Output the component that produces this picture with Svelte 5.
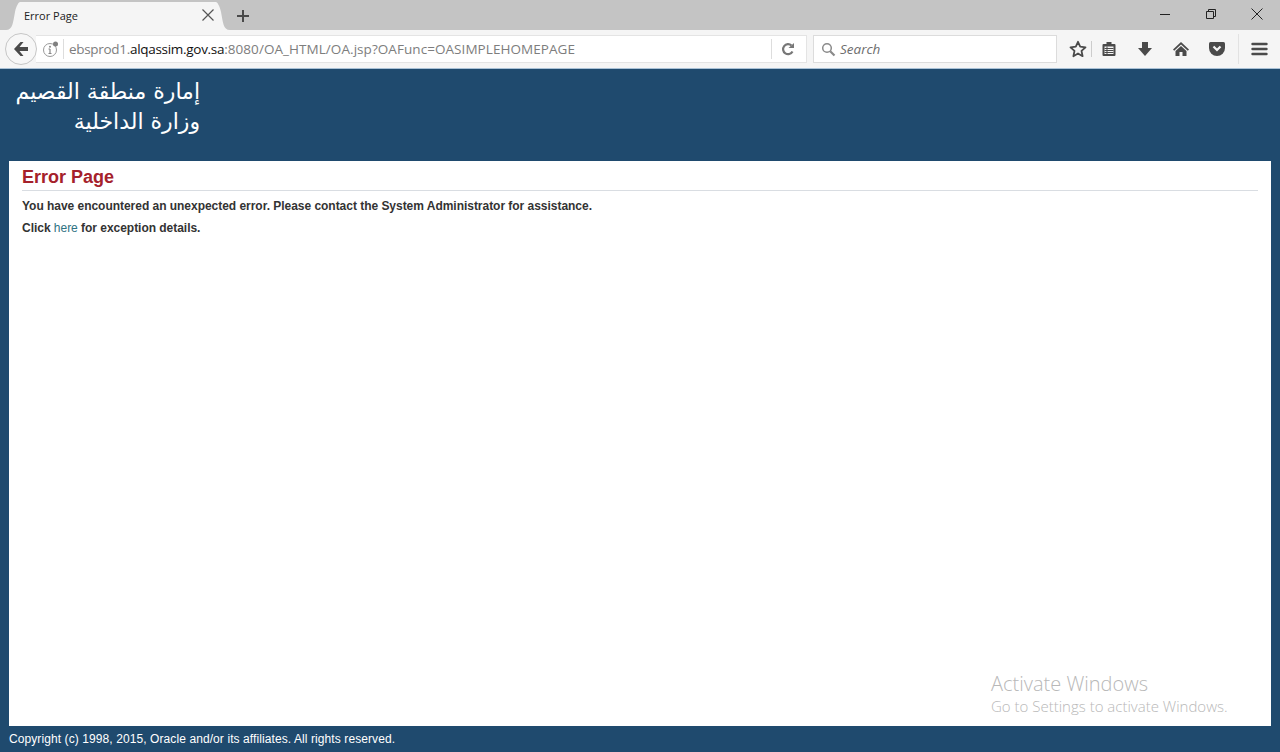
<script>
  let title = 'Error Page'
</script>

<div class="page">
  <div class="tabstrip">
    <div class="tab">
      <svg class="tabside" width="14" height="30" viewBox="0 0 14 30"><path d="M0 30C7 30 7 22 9 12 10.500 5 13 2 14 2V30Z" fill="#f5f5f5"/></svg>
      <div class="tabbody">
        <span class="tabtitle">{title}</span>
        <svg width="14" height="14" viewBox="0 0 14 14"><path d="M1.500 1.500 12.500 12.500M12.500 1.500 1.500 12.500" stroke="#555" stroke-width="1.200" fill="none"/></svg>
      </div>
      <svg class="tabside" width="14" height="30" viewBox="0 0 14 30"><path d="M14 30C7 30 7 22 5 12 3.500 5 1 2 0 2V30Z" fill="#f5f5f5"/></svg>
    </div>
    <svg class="newtab" width="14" height="14" viewBox="0 0 14 14"><path d="M7 1V13M1 7H13" stroke="#4a4a4a" stroke-width="2" fill="none"/></svg>
    <div class="winbtns">
      <svg width="12" height="12" viewBox="0 0 12 12"><path d="M1 6.500H11" stroke="#222" stroke-width="1"/></svg>
      <svg width="12" height="12" viewBox="0 0 12 12"><path d="M1.500 3.500H8.500V10.500H1.500ZM3.500 3.500V1.500H10.500V8.500H8.500" stroke="#222" fill="none"/></svg>
      <svg width="12" height="12" viewBox="0 0 12 12"><path d="M.5.500 11.500 11.500M11.500.500.500 11.500" stroke="#222" fill="none"/></svg>
    </div>
  </div>

  <div class="toolbar">
    <div class="urlbar">
      <svg class="info" width="18" height="18" viewBox="0 0 18 18">
        <circle cx="8" cy="10" r="6.500" stroke="#999" fill="none"/>
        <path d="M8 9V13.500M6.500 9H8M6.500 13.500H9.500" stroke="#888" stroke-width="1.200" fill="none"/>
        <circle cx="8" cy="6.800" r="1" fill="#888"/>
        <circle cx="13.500" cy="4" r="2.500" fill="#808080"/>
      </svg>
      <span class="urlsep"></span>
      <span class="url">ebsprod1.<b>alqassim.gov.sa</b><span class="urlrest">:8080/OA_HTML/OA.jsp?OAFunc=OASIMPLEHOMEPAGE</span></span>
      <span class="urlsep end"></span>
      <svg class="reload" width="14" height="14" viewBox="0 0 14 14"><path d="M11.500 9.500A5 5 0 1 1 10.500 3.500" stroke="#777" stroke-width="2.200" fill="none"/><path d="M7.500 6H13V1Z" fill="#777"/></svg>
    </div>
    <div class="back">
      <svg width="18" height="16" viewBox="0 0 18 16"><path d="M8.500 1 2 8 8.500 15H11.500L7.500 10H16V6H7.500L11.500 1Z" fill="#4a4a4a"/></svg>
    </div>
    <div class="search">
      <svg width="15" height="15" viewBox="0 0 15 15"><circle cx="6" cy="6" r="4.300" stroke="#8a8a8a" stroke-width="1.500" fill="none"/><path d="M9.200 9.200 13.500 13.500" stroke="#8a8a8a" stroke-width="2.200"/></svg>
      <span>Search</span>
    </div>
    <div class="tools">
      <svg class="star" width="18" height="18" viewBox="0 0 18 18"><path d="M9 1.800 11.200 6.700 16.500 7.300 12.500 10.900 13.600 16.200 9 13.500 4.400 16.200 5.500 10.900 1.500 7.300 6.800 6.700Z" stroke="#4a4a4a" stroke-width="1.800" stroke-linejoin="round" fill="none"/></svg>
      <span class="toolsep"></span>
      <svg class="list" width="16" height="16" viewBox="0 0 16 16"><path d="M2.500 3H5.500V1H10.500V3H13.500Q14.500 3 14.500 4V14Q14.500 15 13.500 15H2.500Q1.500 15 1.500 14V4Q1.500 3 2.500 3Z" fill="#4a4a4a"/><path d="M3.500 5.500H12.500V13H3.500Z" fill="#f5f5f5"/><path d="M3.500 7.500H12.500M3.500 9.500H12.500M3.500 11.500H12.500M6 5.500V13" stroke="#4a4a4a"/></svg>
      <svg class="down" width="16" height="16" viewBox="0 0 16 16"><path d="M5 1H11V7H15L8 15 1 7H5Z" fill="#4a4a4a"/></svg>
      <svg class="home" width="16" height="16" viewBox="0 0 16 16"><path d="M8 1 16 8.500 14.800 9.700 8 3.500 1.200 9.700 0 8.500Z" fill="#4a4a4a"/><path d="M8 5 13.500 10V15H9.500V11H6.500V15H2.500V10Z" fill="#4a4a4a"/></svg>
      <svg class="pocket" width="18" height="16" viewBox="0 0 18 16"><path d="M2.500 1H15.500Q17 1 17 2.500V7A8 8 0 0 1 1 7V2.500Q1 1 2.500 1Z" fill="#4a4a4a"/><path d="M5.500 5.500 9 9 12.500 5.500" stroke="#f5f5f5" stroke-width="2.200" fill="none"/></svg>
      <span class="toolsep menu"></span>
      <svg width="17" height="14" viewBox="0 0 17 14"><path d="M1.500 2H15.500M1.500 7H15.500M1.500 12H15.500" stroke="#4a4a4a" stroke-width="2.400" stroke-linecap="round"/></svg>
    </div>
  </div>

  <header class="banner">
    <div class="logo" dir="rtl">
      <div>إمارة منطقة القصيم</div>
      <div>وزارة الداخلية</div>
    </div>
  </header>

  <main class="content">
    <h1>{title}</h1>
    <p>You have encountered an unexpected error. Please contact the System Administrator for assistance.</p>
    <p>Click <a href="#details">here</a> for exception details.</p>
    <div class="activate">
      <div class="big">Activate Windows</div>
      <div>Go to Settings to activate Windows.</div>
    </div>
  </main>

  <footer class="foot">Copyright (c) 1998, 2015, Oracle and/or its affiliates. All rights reserved.</footer>
</div>

<style>
  :global(body) {
    margin: 0;
    background: #1f4a6e;
  }

  .page {
    display: flex;
    flex-direction: column;
    height: 752px;
    overflow: hidden;
    font-family: "Liberation Sans", Arial, sans-serif;
    background: #1f4a6e;
  }

  /* browser chrome */
  .tabstrip {
    display: flex;
    align-items: stretch;
    height: 30px;
    flex: none;
    background: #c4c4c4;
  }

  .tab {
    display: flex;
    margin-left: 6px;
    width: 224px;
  }

  .tabside {
    flex: none;
    display: block;
  }

  .tabbody {
    flex: 1;
    display: flex;
    align-items: center;
    justify-content: space-between;
    margin-top: 2px;
    padding: 0 1px 2px 4px;
    background: #f5f5f5;
  }

  .tabtitle {
    font: 11px "Open Sans", sans-serif;
    color: #222;
  }

  .newtab {
    align-self: center;
    margin-left: 6px;
    margin-bottom: -2px;
  }

  .winbtns {
    display: flex;
    align-items: center;
    gap: 34px;
    margin-left: auto;
    padding-right: 17px;
    margin-bottom: 2px;
  }

  .toolbar {
    position: relative;
    display: flex;
    align-items: center;
    flex: none;
    height: 39px;
    box-sizing: border-box;
    padding-left: 36px;
    background: #f5f5f5;
    border-bottom: 1px solid #a9c1d6;
  }

  .back {
    position: absolute;
    left: 5px;
    top: 3px;
    width: 30px;
    height: 30px;
    display: flex;
    align-items: center;
    justify-content: center;
    background: #f7f7f7;
    border: 1px solid #c6c6c6;
    border-radius: 50%;
  }

  .urlbar {
    display: flex;
    align-items: center;
    width: 771px;
    height: 28px;
    box-sizing: border-box;
    padding-left: 6px;
    background: #fff;
    border: 1px solid #e4e4e4;
    border-left: none;
  }

  .info {
    flex: none;
  }

  .urlsep {
    width: 1px;
    height: 20px;
    margin: 0 5px 0 3px;
    background: #ddd;
    flex: none;
  }

  .urlsep.end {
    margin: 0 9px 0 auto;
  }

  .url {
    font: 13.500px "Open Sans", sans-serif;
    color: #7d7d7d;
    white-space: nowrap;
    letter-spacing: -0.3px;
  }

  .url b {
    font-weight: 400;
    color: #111;
  }

  .urlrest {
    letter-spacing: 0.06px;
  }

  .reload {
    flex: none;
    margin-right: 11px;
  }

  .search {
    display: flex;
    align-items: center;
    gap: 4px;
    width: 244px;
    height: 28px;
    box-sizing: border-box;
    margin-left: 6px;
    padding-left: 7px;
    background: #fff;
    border: 1px solid #dcdcdc;
    font: italic 13.500px "Open Sans", sans-serif;
    color: #6d6d6d;
  }

  .tools {
    display: flex;
    align-items: center;
    flex: 1;
    padding-left: 12px;
  }

  .toolsep {
    width: 1px;
    height: 16px;
    margin: 0 9px 0 4px;
    background: #ccc;
  }

  .down {
    margin-left: 20px;
  }

  .home {
    margin-left: 20px;
  }

  .pocket {
    margin-left: 19px;
  }

  .toolsep.menu {
    height: 30px;
    margin: 0 12px 0 12px;
    background: #e2e2e2;
  }

  /* page */
  .banner {
    flex: none;
    height: 92px;
    box-sizing: border-box;
    padding: 8px 0 0 16px;
  }

  .logo {
    width: 184px;
    font: 22px/30px "DejaVu Sans", sans-serif;
    color: #fff;
    white-space: nowrap;
  }

  .content {
    position: relative;
    flex: 1;
    margin: 0 9px;
    padding: 5px 13px 0;
    background: #fff;
  }

  h1 {
    margin: 0 0 8px;
    padding-bottom: 2px;
    font-size: 18px;
    line-height: 22px;
    font-weight: 700;
    color: #a5212b;
    border-bottom: 1px solid #d9dde2;
  }

  p {
    margin: 0 0 7px;
    font-size: 12px;
    line-height: 15px;
    font-weight: 700;
    letter-spacing: -0.03px;
    color: #333;
  }

  a {
    font-weight: 400;
    color: #2f7383;
    text-decoration: none;
  }

  .activate {
    position: absolute;
    left: 982px;
    top: 510px;
    font: 300 15px/19px "Open Sans", sans-serif;
    color: #b8b8b8;
    white-space: nowrap;
  }

  .big {
    font-size: 20px;
    line-height: 26px;
  }

  .foot {
    flex: none;
    height: 26px;
    box-sizing: border-box;
    padding: 6px 0 0 9px;
    font-size: 12px;
    line-height: 15px;
    letter-spacing: 0.09px;
    color: #fff;
  }
</style>
